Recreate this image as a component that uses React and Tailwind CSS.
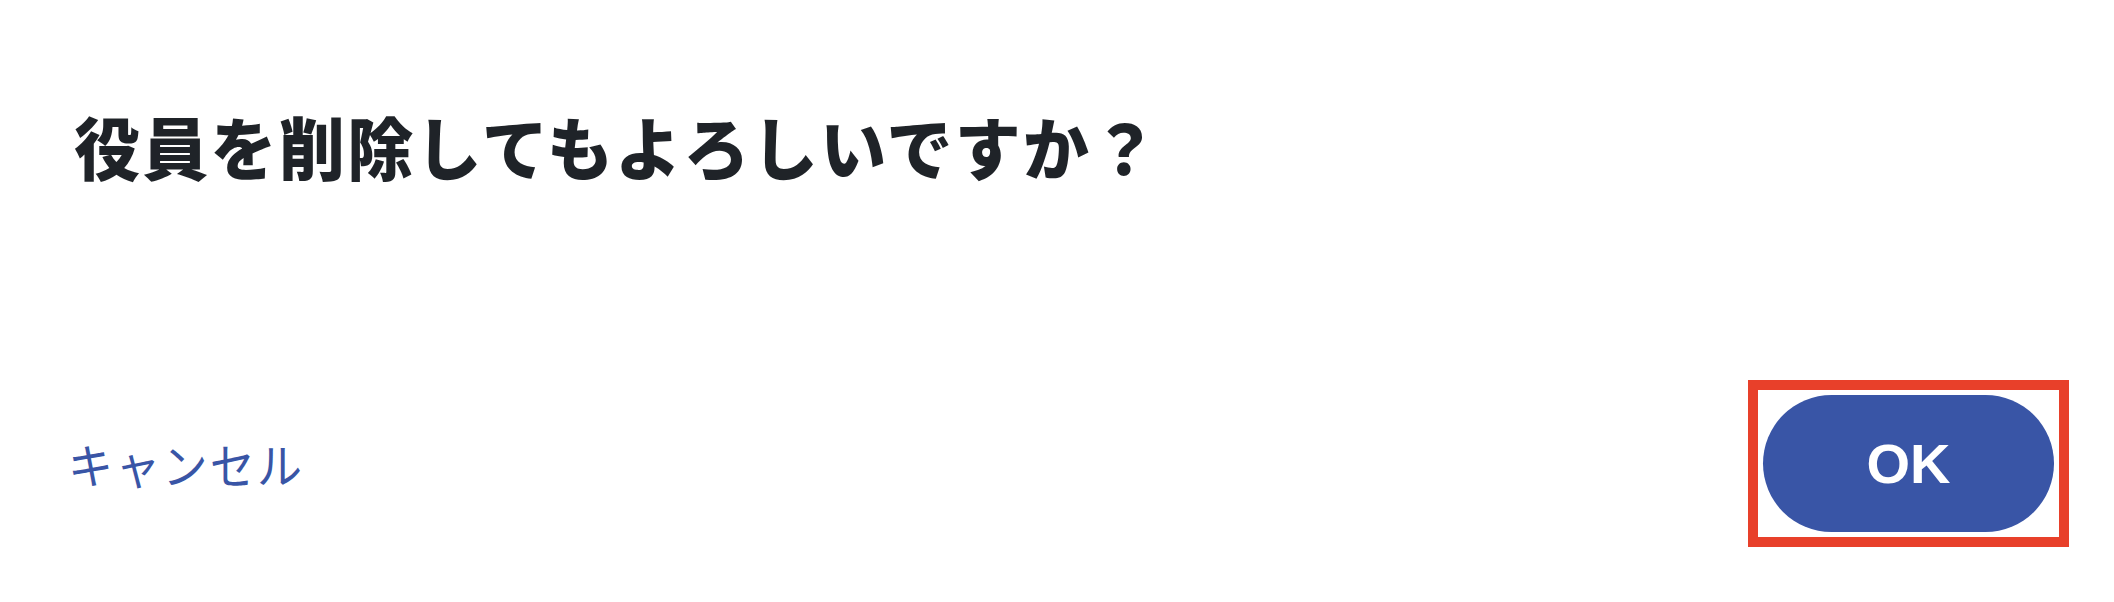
export default function App() {
  return (
    <div
      className="w-[2114px] h-[602px] bg-white flex flex-col"
      style={{ fontFamily: '"Noto Sans CJK JP", "Noto Sans", sans-serif' }}
    >
      <h1 className="pl-[74px] pt-[97px] text-[66px] leading-[96px] font-black text-[#1f2328] tracking-[0.035em]">
        <span className="inline-block scale-y-[1.03]">役員を削除してもよろしいですか？</span>
      </h1>

      <div className="mt-auto mb-[55px] pl-[68px] pr-[45px] flex items-center justify-between">
        <button className="text-[45px] leading-none text-[#3955a6] tracking-[0.05em]">
          <span className="inline-block scale-y-[1.06]">キャンセル</span>
        </button>
        <div className="border-[10px] border-[#e8402a] p-[5px]">
          <button
            className="w-[291px] h-[137px] rounded-full bg-[#3955a6] text-white text-[56px] font-bold flex items-center justify-center"
            style={{ fontFamily: '"Liberation Sans", Arial, sans-serif' }}
          >
            OK
          </button>
        </div>
      </div>
    </div>
  )
}
